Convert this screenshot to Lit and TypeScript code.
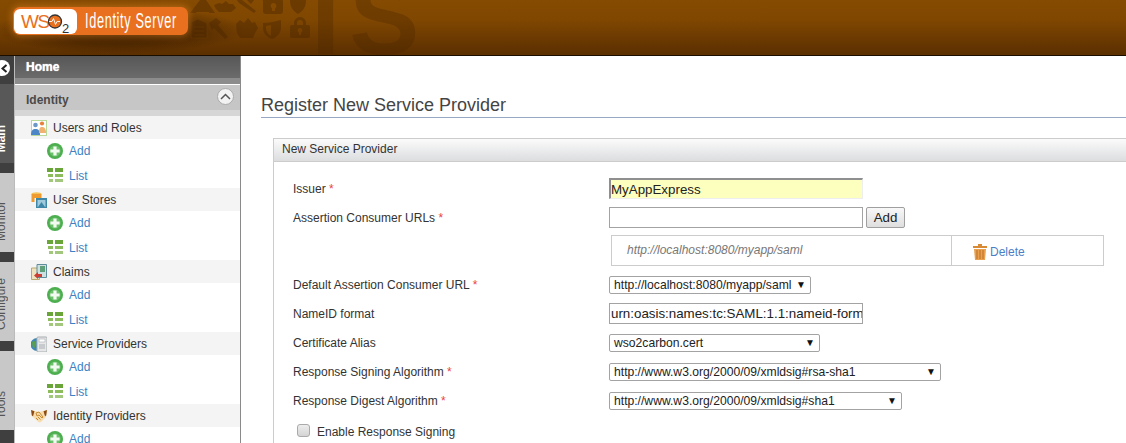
import { LitElement, html, css, svg } from "lit";
import { customElement } from "lit/decorators.js";

const addIcon = html`<svg class="ic" width="16" height="16" viewBox="0 0 16 16"><circle cx="8" cy="8" r="8" fill="#4cae4f"/><circle cx="8" cy="8" r="5.6" fill="#6cc06c"/><path d="M6.400 3.400h3.200v3h3v3.200h-3v3H6.400v-3h-3V6.400h3z" fill="#f3faf2"/></svg>`;
const listIcon = html`<svg class="ic" width="16" height="16" viewBox="0 0 16 16"><path d="M0 0h6v4H0zM8 0h8v4H8z" fill="#6aa53a"/><path d="M1 6h5v3H1zM8 6h8v3H8z" fill="#8cbc5c"/><path d="M2 11h4v3H2zM8 11h8v3H8z" fill="#a3c87d"/></svg>`;

const iconUsers = html`<svg class="mi" width="16" height="16" viewBox="0 0 16 16"><rect x=".5" y=".5" width="15" height="15" fill="#fff" stroke="#b9d99a"/><circle cx="4.500" cy="5" r="2.300" fill="#6c97c9"/><path d="M0 15c0-5 2-6 4.500-6S9 10 9 15z" fill="#4d86c6"/><circle cx="11" cy="3.500" r="2.100" fill="#e9803a"/><path d="M8 13c0-5 1-6 3-6s4 1 4 6z" fill="#f2b26f"/></svg>`;
const iconStores = html`<svg class="mi" width="16" height="16" viewBox="0 0 16 16"><ellipse cx="5.500" cy="2" rx="5" ry="1.700" fill="#f4c25b"/><path d="M.5 2v8h3V6h7V2z" fill="#ee9a2e"/><path d="M5 6h11v10H5z" fill="#3f87a8"/><path d="M6.500 8h8v7h-8z" fill="#9fcbdc"/><path d="M7 15l3.500-5 3.500 5z" fill="#3f87a8"/></svg>`;
const iconClaims = html`<svg class="mi" width="16" height="16" viewBox="0 0 16 16"><path d="M.5 4h8v11.500h-8z" fill="#efe3bd" stroke="#bba86f"/><path d="M6 .5h9.500v13H6z" fill="#cfe0e3" stroke="#5f8d9c"/><path d="M9 2h5v6H9z" fill="#5fa07a"/><path d="M3 11.500L7 8v2h4v3H7v2z" fill="#cc3d34"/></svg>`;
const iconService = html`<svg class="mi" width="16" height="16" viewBox="0 0 16 16"><circle cx="6" cy="8.500" r="6.500" fill="#3f88b5"/><path d="M1 6c2-2 4-1 4 1s-1 5-2 5-2-3-2-6z" fill="#58a04f"/><rect x="6" y="1" width="10" height="15" rx="1" fill="#e5e7e8" stroke="#a8acaf"/><rect x="8" y="3" width="6" height="3" fill="#fff" stroke="#a8acaf" stroke-width=".6"/><rect x="8" y="8" width="6" height="5" fill="#c7cbcd"/></svg>`;
const iconIdp = html`<svg class="mi" width="16" height="16" viewBox="0 0 16 16"><path d="M0 2l4 1 4 1 4-1 4-1-1 7-5 5-2 .5L3 10 1 8z" fill="#f7dcae"/><path d="M0 2l3.500 1.200-1.500 5L.8 7.500zM16 2l-3.500 1.200 1.500 5 1.200-.7z" fill="#8c4b12"/><path d="M5 5l3-1 4 5-1 1-3-3-2 1zM5 10l2 2M7 9l2.500 2.500" fill="none" stroke="#c98a32" stroke-width="1"/></svg>`;

const groups = [
  ["Users and Roles", iconUsers],
  ["User Stores", iconStores],
  ["Claims", iconClaims],
  ["Service Providers", iconService],
  ["Identity Providers", iconIdp],
] as const;

const lock = (x: number, y: number) => svg`
  <path fill-rule="evenodd" transform="translate(${x} ${y})" d="M4 8V6a6 6 0 0 1 12 0v2h2a2 2 0 0 1 2 2v9a2 2 0 0 1-2 2H2a2 2 0 0 1-2-2V10a2 2 0 0 1 2-2zM7 8h6V6a3 3 0 0 0-6 0zM10 11a2.500 2.500 0 0 0-1 4.800V18h2v-2.200A2.500 2.500 0 0 0 10 11z"/>`;
const shield = (x: number, y: number) => svg`
  <path fill-rule="evenodd" transform="translate(${x} ${y})" d="M0 3C7 3 13 1 18 0v8c0 5-4 9-9 11-5-2-9-6-9-11zM3 6v3c0 3 3 6 5 7V5z"/>`;

const bgIcons = svg`
  <defs>
    <radialGradient id="glow" cx=".5" cy=".5" r=".5">
      <stop offset="0" stop-color="#2c1400" stop-opacity=".75"/>
      <stop offset=".6" stop-color="#2c1400" stop-opacity=".4"/>
      <stop offset="1" stop-color="#2c1400" stop-opacity="0"/>
    </radialGradient>
  </defs>
  <ellipse cx="120" cy="30" rx="125" ry="24" fill="url(#glow)"/>
  <g fill="#4a2600" opacity=".42">
    <path d="M190 13l10-13h6l9 13h-6v-1h-13v1z"/>
    <path d="M214 5l5-2 3 1 4-3 3 3 4 0 3 4-5 4h-12l-3-3z"/>
    <path d="M237 0h5l14 11-2 2-15-10zM247 0h7l-3 4z"/>
    <path fill-rule="evenodd" d="M266 0h16a1 1 0 0 1 1 1v10c0 2-1 3-3 3h-14c-2 0-3-1-3-3V1a1 1 0 0 1 2-1zM273 3a3 3 0 0 0-1 5.500V11h3V8.500A3 3 0 0 0 273 3z"/>
    <path d="M290 0h16c0 7-3 11-8 14-5-3-8-7-8-14z"/>
    <path d="M191 22l7-3 9 4v15h-16zM194 27h10M194 31h10M194 35h10" stroke="#7a4400" stroke-width=".6"/>
    <path d="M209 23l7-5 5 4-3 3 10 12-3 2-11-11-2 2z"/>
    <path d="M236 24l4-4 4 3 4-5 4 5 3-1 3 6-3 5-2 5h-13l-3-5z"/>
    ${shield(263, 20)}
    ${lock(290, 17)}
  </g>
  <text x="311" y="54" font-family="Liberation Sans, sans-serif" font-weight="bold" font-size="105" letter-spacing="9" fill="#4a2600" opacity=".32">IS</text>
`;

@customElement("app-root")
export class AppRoot extends LitElement {
  static styles = css`
    :host { display: block; width: 1126px; height: 443px; overflow: hidden; font-family: "Liberation Sans", Arial, sans-serif; background: #fff; color: #333; font-size: 12px; }
    .head { position: relative; height: 55px; border-bottom: 1px solid #1a0e00; background: linear-gradient(#854b02, #804701 35%, #693801 75%, #5b2f00); overflow: hidden; }
    .bg { position: absolute; inset: 0; }
    .logo { position: absolute; left: 13px; top: 7px; width: 175px; height: 28px; background: #e8701f; border-radius: 7px; box-shadow: 0 0 6px 2px rgba(240,140,40,.4); display: flex; align-items: center; gap: 8px; padding-left: 1px; box-sizing: border-box; }
    .wso { width: 63px; height: 25px; background: #fff; border-radius: 6px; display: block; flex: none; }
    .logo-t { color: #fff; font-size: 22px; letter-spacing: 1.100px; line-height: 30px; transform: scaleX(.58); transform-origin: left center; white-space: nowrap; }
    .body { display: flex; height: 387px; }
    .rail { position: relative; width: 14px; background: #3f3f3f; flex: none; overflow: hidden; display: flex; flex-direction: column; padding-top: 28px; gap: 10px; box-sizing: border-box; }
    .close { position: absolute; left: -6px; top: 4px; width: 16px; height: 16px; border-radius: 50%; background: #fff; display: flex; align-items: center; justify-content: center; z-index: 1; }
    .close svg { margin-left: 4px; }
    .tab { height: 79px; flex: none; width: 14px; background: #c8c8c8; position: relative; overflow: hidden; color: #555; }
    .tab.on { background: #585858; color: #fff; font-weight: bold; }
    .tab span { position: absolute; right: 6px; bottom: 11px; writing-mode: vertical-rl; transform: rotate(180deg); font-size: 12px; line-height: 14px; white-space: nowrap; }
    .gutter { width: 1px; background: #bbb; flex: none; }
    .nav { width: 225px; flex: none; border-right: 1px solid #8a8a8a; overflow: hidden; }
    .home { height: 19px; background: linear-gradient(#575757, #6b6b6b); color: #fff; font-weight: bold; font-size: 12px; padding: 3px 0 0 11px; line-height: 16px; border-bottom: 6px solid #8c8c8c; text-shadow: 0 0 1px #fff; }
    .ident { margin-top: 1px; height: 21px; background: #c6c6c6; color: #4a4a4a; font-weight: bold; font-size: 12px; padding: 4px 6px 0 11px; display: flex; align-items: center; justify-content: space-between; border-bottom: 6px solid #d6d6d6; }
    .ident-btn { width: 15px; height: 15px; border-radius: 50%; background: #f2f2f2; border: 1px solid #aaa; display: flex; align-items: center; justify-content: center; position: relative; top: -3px; }
    .mh { height: 23px; background: #f4f4f4; display: flex; align-items: center; padding-left: 16px; gap: 6px; color: #333; font-size: 12px; }
    .mi-row { height: 24px; display: flex; align-items: center; padding-left: 32px; gap: 6px; color: #3b82c4; font-size: 12px; }
    .mi-row.last { height: 25px; }
    .ic, .mi { flex: none; display: block; }
    .main { flex: 1; min-width: 0; padding: 39px 0 0 20px; overflow: hidden; }
    h2 { margin: 0; font-weight: normal; font-size: 18px; color: #444; line-height: 21px; border-bottom: 1px solid #97a8c4; height: 21px; padding-bottom: 1px; }
    .box { margin: 20px 0 0 12px; border: 1px solid #ccc; border-right: none; border-bottom: none; }
    .box-h { height: 22px; padding-left: 8px; line-height: 21px; font-size: 12px; color: #333; background: linear-gradient(#fbfbfb, #dcdddf); border-bottom: 1px solid #ccc; }
    .form { padding: 12px 0 0 19px; display: grid; grid-template-columns: 316px 1fr; grid-auto-rows: min-content; align-items: center; }
    .lab { font-size: 12px; color: #333; white-space: nowrap; }
    .lab i { color: #e8434b; font-style: normal; }
    .cell { display: flex; align-items: center; gap: 3px; height: 29px; }
    .inp { box-sizing: border-box; width: 254px; height: 21px; border: 1px solid #a3a3a3; font-size: 13.330px; padding: 0 1px; line-height: 19px; color: #222; overflow: hidden; white-space: nowrap; background: #fff; }
    .inp.y { background: #fcffbe; border-color: #eee; border-top: 2px solid #8f8f8f; border-left: 2px solid #8f8f8f; padding: 0; line-height: 19px; }
    .btn { box-sizing: border-box; width: 39px; height: 21px; border: 1px solid #9f9f9f; border-radius: 2px; background: linear-gradient(#f8f8f8, #dedede); font-size: 13.330px; color: #222; text-align: center; line-height: 19px; }
    .tbl { grid-column: 2; margin: 3px 0 4px 2px; width: 493px; height: 31px; box-sizing: border-box; border: 1px solid #ccc; display: flex; font-size: 12px; }
    .url { width: 340px; box-sizing: border-box; border-right: 1px solid #ccc; font-style: italic; color: #777; padding: 0 0 2px 15px; display: flex; align-items: center; }
    .del { flex: 1; display: flex; align-items: center; padding: 2px 0 0 21px; gap: 3px; color: #4a7fc6; }
    .sel { box-sizing: border-box; height: 18px; border: 1px solid #a3a3a3; border-radius: 2px; display: flex; align-items: center; justify-content: space-between; padding: 0 4px 0 4px; font-size: 12.150px; color: #222; background: #fff; white-space: nowrap; }
    .sel b { font-size: 10px; font-weight: normal; color: #111; }
    .chk { grid-column: 1 / -1; margin-top: 5px; display: flex; align-items: center; gap: 7px; padding-left: 4px; height: 24px; font-size: 12px; color: #333; }
    .box-c { width: 13px; height: 13px; border: 1px solid #aaa; border-radius: 3px; background: linear-gradient(#ededed, #d4d4d4); box-sizing: border-box; position: relative; top: -2px; }
  `;

  private row(label: string, req: boolean, control: unknown) {
    return html`<div class="lab">${label}${req ? html`<i> *</i>` : ""}</div><div class="cell">${control}</div>`;
  }

  private sel(text: string, w: number) {
    return html`<div class="sel" style="width:${w}px"><span>${text}</span><b>▼</b></div>`;
  }

  render() {
    return html`
      <div class="head">
        <svg class="bg" width="1126" height="55" viewBox="0 0 1126 55">${bgIcons}</svg>
        <div class="logo">
          <svg class="wso" viewBox="0 0 63 25">
            <text x="7" y="19" font-family="Liberation Sans, sans-serif" font-size="19" letter-spacing="-1.500" fill="#e8701f">WS</text>
            <circle cx="41" cy="12.500" r="6.500" fill="#e8701f" stroke="#333" stroke-width="1.300"/>
            <path d="M35 12.500h3l1.500-3 2 6 1.500-3h3" fill="none" stroke="#fff" stroke-width=".9"/>
            <text x="48" y="24" font-family="Liberation Sans, sans-serif" font-size="13" fill="#333">2</text>
          </svg>
          <span class="logo-t">Identity Server</span>
        </div>
      </div>
      <div class="body">
        <div class="rail">
          <div class="close"><svg width="9" height="9" viewBox="0 0 9 9"><path d="M6.500 1L2.500 4.500l4 3.500" fill="none" stroke="#222" stroke-width="2"/></svg></div>
          <div class="tab on"><span>Main</span></div>
          <div class="tab"><span>Monitor</span></div>
          <div class="tab"><span>Configure</span></div>
          <div class="tab"><span>Tools</span></div>
        </div>
        <div class="gutter"></div>
        <div class="nav">
          <div class="home">Home</div>
          <div class="ident">Identity
            <span class="ident-btn"><svg width="11" height="7" viewBox="0 0 11 7"><path d="M1 6l4.500-4.500L10 6" fill="none" stroke="#555" stroke-width="1.500"/></svg></span>
          </div>
          ${groups.map(([name, icon]) => html`
            <div class="mh">${icon}<span>${name}</span></div>
            <div class="mi-row">${addIcon}<span>Add</span></div>
            <div class="mi-row last">${listIcon}<span>List</span></div>
          `)}
        </div>
        <div class="main">
          <h2>Register New Service Provider</h2>
          <div class="box">
            <div class="box-h">New Service Provider</div>
            <div class="form">
              ${this.row("Issuer", true, html`<div class="inp y">MyAppExpress</div>`)}
              ${this.row("Assertion Consumer URLs", true, html`<div class="inp"></div><div class="btn">Add</div>`)}
              <div class="tbl">
                <div class="url">http://localhost:8080/myapp/saml</div>
                <div class="del">
                  <svg width="14" height="16" viewBox="0 0 14 16"><path d="M5 0h4v2h5v2H0V2h5z" fill="#d98a35"/><path d="M1 5h12l-1 11H2z" fill="#e9a04f"/><path d="M4 6v9M7 6v9M10 6v9" stroke="#b86f20" stroke-width="1"/></svg>
                  <span>Delete</span>
                </div>
              </div>
              ${this.row("Default Assertion Consumer URL", true, this.sel("http://localhost:8080/myapp/saml", 202))}
              ${this.row("NameID format", false, html`<div class="inp">urn:oasis:names:tc:SAML:1.1:nameid-format:emailAddress</div>`)}
              ${this.row("Certificate Alias", false, this.sel("wso2carbon.cert", 211))}
              ${this.row("Response Signing Algorithm", true, this.sel("http://www.w3.org/2000/09/xmldsig#rsa-sha1", 332))}
              ${this.row("Response Digest Algorithm", true, this.sel("http://www.w3.org/2000/09/xmldsig#sha1", 293))}
              <div class="chk"><div class="box-c"></div><span>Enable Response Signing</span></div>
            </div>
          </div>
        </div>
      </div>
    `;
  }
}
